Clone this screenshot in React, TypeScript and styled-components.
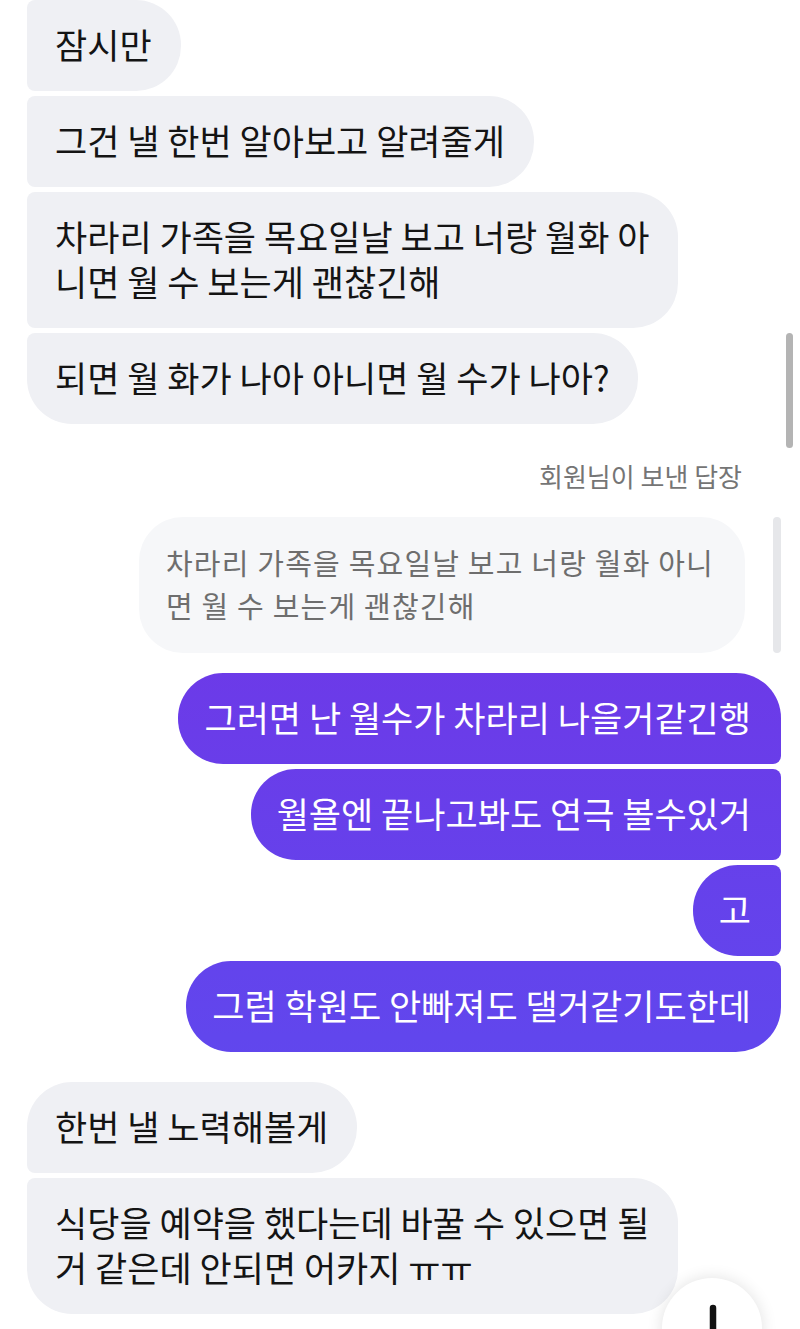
import React from "react";
import styled, { createGlobalStyle, css } from "styled-components";

const GlobalStyle = createGlobalStyle`
  html, body {
    margin: 0;
    padding: 0;
    background: #ffffff;
  }
  body {
    font-family: "Noto Sans CJK KR", "Noto Sans", sans-serif;
    -webkit-font-smoothing: antialiased;
  }
  * { box-sizing: border-box; }
`;

type Side = "in" | "out";
type Pos = "first" | "middle" | "last" | "single";

const BIG = 45;
const SMALL = 8;

const Screen = styled.div`
  position: relative;
  width: 800px;
  height: 1329px;
  overflow: hidden;
  background: #ffffff;
  display: flex;
  flex-direction: column;
  padding: 0 19px 0 27px;
`;

const Group = styled.div<{ $side: Side; $top: number }>`
  display: flex;
  flex-direction: column;
  gap: 5px;
  margin-top: ${(p) => p.$top}px;
  align-items: ${(p) => (p.$side === "in" ? "flex-start" : "flex-end")};
`;

const radius = (side: Side, pos: Pos) => {
  const start = pos === "first" || pos === "single" ? BIG : SMALL;
  const end = pos === "last" || pos === "single" ? BIG : SMALL;
  if (side === "in") return `${start}px ${BIG}px ${BIG}px ${end}px`;
  return `${BIG}px ${start}px ${end}px ${BIG}px`;
};

const Bubble = styled.div<{ $side: Side; $pos: Pos }>`
  font-size: 35px;
  line-height: 45px;
  padding: 21px 29px 25px 28px;
  white-space: nowrap;
  border-radius: ${(p) => radius(p.$side, p.$pos)};
  ${(p) =>
    p.$side === "in"
      ? css`
          background: #eff0f4;
          color: #141414;
        `
      : css`
          background: linear-gradient(
            180deg,
            #7233e6 0%,
            #6c3ae8 50%,
            #6146ed 78%,
            #5a4ef0 100%
          );
          background-attachment: fixed;
          color: #ffffff;
          padding: 21px 30px 25px 26px;
        `}
`;

const ReplyBlock = styled.div`
  display: flex;
  flex-direction: column;
  align-items: flex-end;
  margin-top: 37px;
`;

const ReplyLabel = styled.div`
  font-size: 26px;
  line-height: 30px;
  color: #757575;
  margin-right: 39px;
`;

const QuoteRow = styled.div`
  display: flex;
  align-items: stretch;
  gap: 28px;
  margin-top: 26px;
`;

const QuoteBubble = styled.div`
  background: #f6f7f9;
  color: #6e6e6e;
  font-size: 29px;
  letter-spacing: 1.2px;
  line-height: 43px;
  padding: 24px 31px 26px 27px;
  border-radius: 44px;
  white-space: nowrap;
`;

const QuoteBar = styled.div`
  width: 8px;
  border-radius: 4px;
  background: #e6e7ea;
`;

const ScrollThumb = styled.div`
  position: absolute;
  right: 7px;
  top: 333px;
  width: 7px;
  height: 115px;
  border-radius: 4px;
  background: #b4b4b4;
`;

const ScrollButton = styled.div`
  position: absolute;
  left: 662px;
  top: 1278px;
  width: 100px;
  height: 100px;
  border-radius: 50%;
  background: #ffffff;
  box-shadow: 0 0 16px rgba(0, 0, 0, 0.12);
  display: flex;
  align-items: flex-start;
  justify-content: center;
`;

const ArrowDown = () => (
  <svg width="100" height="100" viewBox="0 0 100 100" fill="none">
    <path
      d="M51 30 V74 M33 57 L51 75 L69 57"
      stroke="#111"
      strokeWidth="6.5"
      strokeLinecap="round"
      strokeLinejoin="round"
    />
  </svg>
);

export default function App() {
  return (
    <>
      <GlobalStyle />
      <Screen>
        <Group $side="in" $top={0}>
          <Bubble $side="in" $pos="middle">잠시만</Bubble>
          <Bubble $side="in" $pos="middle">그건 낼 한번 알아보고 알려줄게</Bubble>
          <Bubble $side="in" $pos="middle">
            차라리 가족을 목요일날 보고 너랑 월화 아
            <br />
            니면 월 수 보는게 괜찮긴해
          </Bubble>
          <Bubble $side="in" $pos="last">되면 월 화가 나아 아니면 월 수가 나아?</Bubble>
        </Group>

        <ReplyBlock>
          <ReplyLabel>회원님이 보낸 답장</ReplyLabel>
          <QuoteRow>
            <QuoteBubble>
              차라리 가족을 목요일날 보고 너랑 월화 아니
              <br />
              면 월 수 보는게 괜찮긴해
            </QuoteBubble>
            <QuoteBar />
          </QuoteRow>
        </ReplyBlock>

        <Group $side="out" $top={20}>
          <Bubble $side="out" $pos="first">그러면 난 월수가 차라리 나을거같긴행</Bubble>
          <Bubble $side="out" $pos="middle">월욜엔 끝나고봐도 연극 볼수있거</Bubble>
          <Bubble $side="out" $pos="middle">고</Bubble>
          <Bubble $side="out" $pos="last">그럼 학원도 안빠져도 댈거같기도한데</Bubble>
        </Group>

        <Group $side="in" $top={30}>
          <Bubble $side="in" $pos="first">한번 낼 노력해볼게</Bubble>
          <Bubble $side="in" $pos="last">
            식당을 예약을 했다는데 바꿀 수 있으면 될
            <br />
            거 같은데 안되면 어카지 ㅠㅠ
          </Bubble>
        </Group>

        <ScrollThumb />
        <ScrollButton>
          <ArrowDown />
        </ScrollButton>
      </Screen>
    </>
  );
}
